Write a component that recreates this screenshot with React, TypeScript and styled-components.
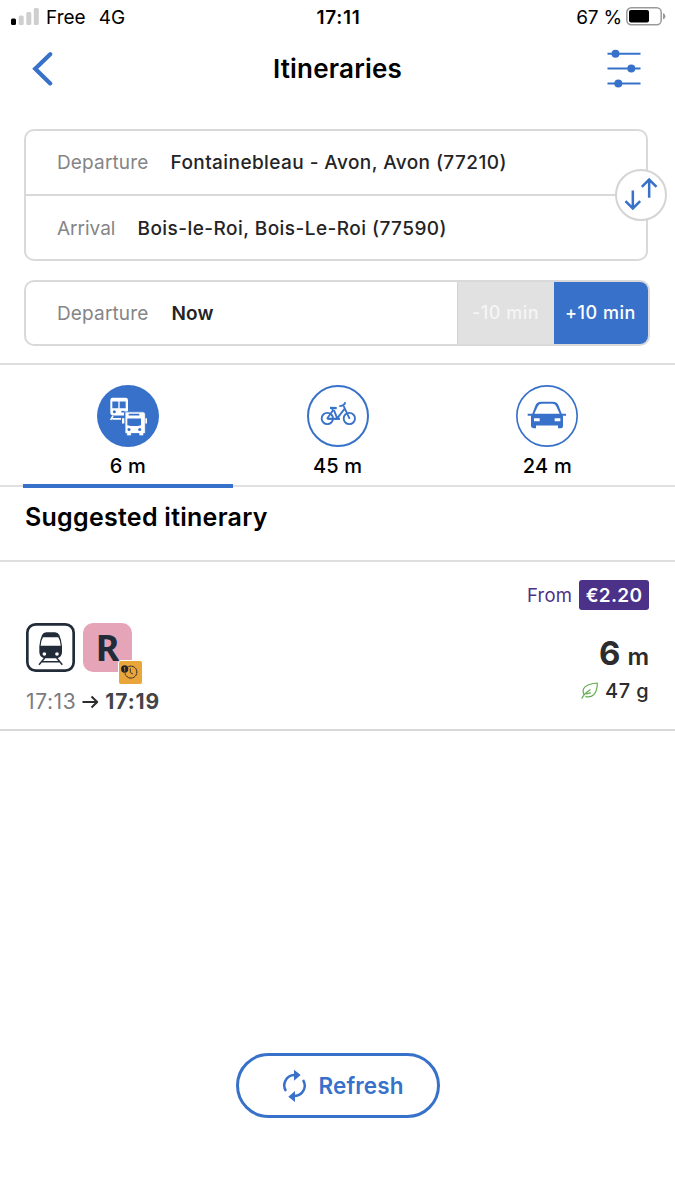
import React from "react";
import styled, { createGlobalStyle } from "styled-components";

const blue = "#3871ca";
const line = "#d9d9db";

const GlobalStyle = createGlobalStyle`
  * { box-sizing: border-box; }
  body { margin: 0; background: #fff; }
  button { font: inherit; padding: 0; margin: 0; border: 0; background: none; letter-spacing: inherit; }
  svg { display: block; flex: none; }
`;

const Screen = styled.div`
  width: 675px;
  height: 1200px;
  background: #fff;
  color: #000;
  font-family: Inter, "Liberation Sans", sans-serif;
  display: flex;
  flex-direction: column;
  overflow: hidden;
`;

const Text = styled.span<{ $size: number; $weight?: number; $spacing?: number; $color?: string }>`
  font-size: ${(p) => p.$size}px;
  font-weight: ${(p) => p.$weight ?? 400};
  letter-spacing: ${(p) => p.$spacing ?? 0}px;
  color: ${(p) => p.$color ?? "inherit"};
  line-height: 1.2;
  white-space: nowrap;
`;

const StatusBar = styled.div`
  height: 34px;
  display: grid;
  grid-template-columns: 1fr auto 1fr;
  align-items: center;
  padding: 2px 9px 0 11px;
  svg { margin-bottom: 2px; }
`;

const Carrier = styled.div`
  display: flex;
  align-items: center;
  gap: 7px;
`;

const Network = styled.div`
  margin-left: 6px;
  display: flex;
`;

const Battery = styled.div`
  display: flex;
  align-items: center;
  justify-content: flex-end;
  gap: 4px;
`;

const Header = styled.header`
  height: 69px;
  display: grid;
  grid-template-columns: 1fr auto 1fr;
  align-items: center;
  padding: 0 32px 0 32px;
  > :first-child { margin-left: -1px; }
  > :last-child { justify-self: end; margin-right: 2px; }
`;

const SearchForm = styled.section`
  padding: 26px 25px 17px 24px;
  display: flex;
  flex-direction: column;
  gap: 19px;
  border-bottom: 2px solid #dedee0;
  height: 262px;
`;

const RouteCard = styled.div`
  position: relative;
  width: 624px;
  height: 132px;
  border: 2px solid ${line};
  border-radius: 10px;
`;

const RouteRow = styled.div`
  height: 63px;
  padding: 1px 0 0 31px;
  display: flex;
  align-items: center;
  gap: 22px;
  & + & { border-top: 2px solid ${line}; height: 65px; padding-top: 4px; }
`;

const SwapButton = styled.button`
  position: absolute;
  right: -21px;
  top: 38px;
  width: 52px;
  height: 52px;
  border: 2px solid #d4d4d6;
  border-radius: 50%;
  background: #fff;
`;

const TimeCard = styled.div`
  height: 66px;
  display: flex;
  align-items: stretch;
  border: 2px solid ${line};
  border-radius: 10px;
  overflow: hidden;
`;

const TimeValue = styled.div`
  flex: 1;
  display: flex;
  align-items: center;
  gap: 23px;
  padding: 2px 0 0 31px;
`;

const ShiftButton = styled.button<{ $active?: boolean }>`
  width: ${(p) => (p.$active ? 94 : 97)}px;
  background: ${(p) => (p.$active ? blue : "#e1e1e1")};
  color: ${(p) => (p.$active ? "#fff" : "#f5f5f5")};
  border-left: ${(p) => (p.$active ? 0 : 1)}px solid #d2d2d4;
  padding-right: 1px;
`;

const Tabs = styled.nav`
  height: 122px;
  display: grid;
  grid-template-columns: repeat(3, 209.75px);
  padding-left: 23px;
  border-bottom: 2px solid #e0e0e2;
`;

const Tab = styled.div<{ $active?: boolean }>`
  height: 123px;
  display: flex;
  flex-direction: column;
  align-items: center;
  padding-top: 20px;
  gap: 7px;
  border-bottom: 4px solid ${(p) => (p.$active ? blue : "transparent")};
`;

const Suggested = styled.div`
  height: 75px;
  padding: 15px 25px;
  border-bottom: 2px solid #dedee0;
`;

const Itinerary = styled.article`
  height: 169px;
  padding: 18px 26px 0;
  border-bottom: 2px solid #d9d9db;
  display: flex;
  justify-content: space-between;
`;

const Journey = styled.div`
  padding-top: 43px;
`;

const Lines = styled.div`
  display: flex;
  gap: 8px;
`;

const LineBadge = styled.div`
  position: relative;
  width: 49px;
  height: 49px;
  border-radius: 10px;
  background: #e5a4b8;
  color: #222b38;
  font-family: "Noto Sans", "Open Sans", sans-serif;
  display: flex;
  align-items: center;
  justify-content: center;
`;

const DelayBadge = styled.div`
  position: absolute;
  left: 34.5px;
  top: 37px;
  width: 25px;
  height: 25px;
  border: 1.5px solid #fff;
  border-radius: 3px;
  background: #e9a53a;
`;

const Times = styled.div`
  display: flex;
  align-items: center;
  gap: 6px;
  margin-top: 17px;
`;

const Summary = styled.div`
  display: flex;
  flex-direction: column;
  align-items: flex-end;
`;

const Fare = styled.div`
  display: flex;
  align-items: center;
  gap: 7px;
  color: #4b3187;
`;

const Price = styled.div`
  width: 70px;
  height: 30px;
  padding-top: 2px;
  border-radius: 3px;
  background: #4b3187;
  display: flex;
  align-items: center;
  justify-content: center;
`;

const Duration = styled.div`
  display: flex;
  align-items: baseline;
  gap: 7px;
  margin-top: 24px;
  color: #2c2c2e;
`;

const Carbon = styled.div`
  display: flex;
  align-items: center;
  gap: 7px;
  margin-top: 5px;
  color: #2c2c2e;
`;

const Footer = styled.footer`
  margin-top: 322px;
  display: flex;
  justify-content: center;
`;

const RefreshButton = styled.button`
  width: 204px;
  height: 65px;
  border: 3px solid ${blue};
  border-radius: 33px;
  color: ${blue};
  display: flex;
  align-items: center;
  padding-left: 43px;
  gap: 11px;
`;

const SignalIcon = () => (
  <svg width="28" height="18" viewBox="0 0 28 18">
    <rect x="0" y="10.5" width="5" height="6.5" rx="1.5" fill="#000" />
    <rect x="7.7" y="7.5" width="5" height="9.5" rx="1.5" fill="#cfcfcf" />
    <rect x="15.3" y="4" width="5" height="13" rx="1.5" fill="#cfcfcf" />
    <rect x="22.8" y="0" width="5" height="17" rx="1.5" fill="#cfcfcf" />
  </svg>
);

const BatteryIcon = () => (
  <svg width="40" height="19" viewBox="0 0 40 19">
    <rect x="0.8" y="0.8" width="34.4" height="17" rx="4.5" fill="none" stroke="#999" strokeWidth="1.5" />
    <rect x="3" y="3" width="20" height="12.4" rx="2" fill="#000" />
    <path d="M37 6q2.4 1 2.4 3.2t-2.4 3.2z" fill="#999" />
  </svg>
);

const BackIcon = () => (
  <svg width="22" height="36" viewBox="0 0 22 36" fill="none" stroke={blue} strokeWidth="4.2" strokeLinecap="round" strokeLinejoin="miter">
    <path d="M19.2 3.2L4.2 17.8L19.2 32.4" />
  </svg>
);

const FiltersIcon = () => (
  <svg width="34" height="40" viewBox="0 0 34 40" stroke={blue} strokeWidth="2" fill={blue}>
    <path d="M0.5 4.8h33M0.5 19.6h33M0.5 34.4h33" />
    <g stroke="none">
      <circle cx="8.5" cy="4.8" r="4" />
      <circle cx="24.3" cy="19.6" r="4" />
      <circle cx="11.3" cy="34.4" r="4" />
    </g>
  </svg>
);

const SwapIcon = () => (
  <svg width="48" height="48" viewBox="530.5 167.5 144 144" fill="none" stroke={blue} strokeWidth="7.5">
    <path d="M578 226v55M556 258l22 22l22-22M627 248v-55M605 215l22-22l22 22" />
  </svg>
);

const TransitIcon = () => (
  <svg width="62" height="62" viewBox="51 44.5 186 186">
    <circle cx="144" cy="137.5" r="93" fill={blue} />
    <path d="M98 83h39q7 0 7 7v36h-12v10h-32q-9 0-9-9v-37q0-7 7-7z" fill="#fff" />
    <path d="M97 94h18v20h-18zM119 94h18v20h-18z" fill={blue} />
    <circle cx="103" cy="125" r="4.5" fill={blue} />
    <path d="M124 122h10v5h-10z" fill={blue} />
    <path d="M99 137l-7 12M97 146h26" stroke="#fff" strokeWidth="5" fill="none" />
    <path d="M137 125h52q7 0 7 7v58h-5v7h-14v-7h-23v7h-14v-7h-5v-60q0-5 2-5z" fill="#fff" stroke={blue} strokeWidth="2.5" />
    <path d="M126 144h7v16h-7zM196 144h5v16h-5z" fill="#fff" />
    <path d="M146 131h32v5h-32zM142 145h41v20q-20 5-41 0z" fill={blue} />
    <circle cx="147" cy="178" r="4.5" fill={blue} />
    <circle cx="179" cy="178" r="4.5" fill={blue} />
  </svg>
);

const BikeIcon = () => (
  <svg width="62" height="62" viewBox="51 44.5 186 186" fill="none" stroke={blue} strokeWidth="5.5">
    <circle cx="144" cy="137.5" r="90" strokeWidth="6" />
    <circle cx="112" cy="145" r="17" />
    <circle cx="178" cy="145" r="17" />
    <path d="M111 146l18-26M129 122l-3-9M132 120l10 26M142 144l21-27M161 108l18 38M166 96q-3 11-18 12" strokeLinejoin="round" />
    <path d="M120 113l20 1" strokeWidth="7" />
    <path d="M112 146h38" strokeWidth="6.5" />
  </svg>
);

const CarIcon = () => (
  <svg width="62" height="62" viewBox="49 44.5 186 186">
    <circle cx="142" cy="137.5" r="90.5" fill="none" stroke={blue} strokeWidth="5" />
    <path d="M96 136l11-29q4-12 18-12h34q14 0 18 12l11 29h2v32q0 6-6 6h-9v-8h-66v8h-6q-9 0-9-8v-30z" fill={blue} />
    <path d="M84 131h115v6h-115z" fill={blue} />
    <path d="M104 131l10-22q3-8 11-8h34q8 0 11 8l10 22z" fill="#fff" />
    <path d="M103 144h17v9h-17zM165 144h17v9h-17z" fill="#fff" />
  </svg>
);

const TrainIcon = () => (
  <svg width="49" height="49" viewBox="48 39 147 147">
    <rect x="52" y="43" width="139" height="139" rx="25" fill="#fff" stroke="#222b38" strokeWidth="8" />
    <path d="M109 67h26q9 0 13 8q6 14 8 34v17q0 14-14 19h-40q-14-5-14-19v-17q2-20 8-34q4-8 13-8z" fill="#222b38" />
    <path d="M99 82h46q7 12 7 25h-60q0-13 7-25z" fill="#fff" />
    <circle cx="103" cy="132" r="5.5" fill="#fff" />
    <circle cx="141" cy="132" r="5.5" fill="#fff" />
    <path d="M104 144L87 164M140 144l17 20M96 155h52" stroke="#222b38" strokeWidth="4.5" />
  </svg>
);

const DelayIcon = () => (
  <svg width="22" height="22" viewBox="327 156 66 66">
    <path d="M355 173a18 18 0 1 1-10 20" fill="none" stroke="#1f2430" strokeWidth="3" strokeDasharray="9 1" />
    <path d="M361 178v13l8 4" fill="none" stroke="#4a391c" strokeWidth="3" />
    <circle cx="344" cy="180" r="11" fill="#1f2430" />
    <path d="M344 174v8M344 184v3" stroke="#e9a53a" strokeWidth="2.5" />
  </svg>
);

const ArrowIcon = () => (
  <svg width="17" height="14" viewBox="0 0 17 14" fill="none" stroke="#2c2c2e" strokeWidth="2" strokeLinejoin="round">
    <path d="M0.5 7h15M9.5 1.5L15.2 7L9.5 12.5" />
  </svg>
);

const LeafIcon = () => (
  <svg width="17" height="17" viewBox="246 367 50 50" fill="none" stroke="#65ad52" strokeWidth="3.5" strokeLinecap="round" strokeLinejoin="round">
    <path d="M249 415q6-14 24-25M255 405q-9-21 12-29q10-4 27-6q0 21-8 31q-9 12-26 9" />
    <path d="M261 402l13-3" />
  </svg>
);

const RefreshIcon = () => (
  <svg width="26" height="34" viewBox="186 87 78 102" fill={blue}>
    <path d="M198 153a31 31 0 0 1 25-48M249 120a31 31 0 0 1-25 48" fill="none" stroke={blue} strokeWidth="7.5" />
    <path d="M222 89l20 16l-20 17zM225 153v33l-20-16z" />
  </svg>
);

const modes = [
  { id: "transit", label: "6 m", icon: <TransitIcon />, active: true },
  { id: "bike", label: "45 m", icon: <BikeIcon /> },
  { id: "car", label: "24 m", icon: <CarIcon /> },
];

export default function App() {
  return (
    <Screen>
      <GlobalStyle />
      <StatusBar>
        <Carrier>
          <SignalIcon />
          <Text $size={19}>Free</Text>
          <Network><Text $size={19}>4G</Text></Network>
        </Carrier>
        <Text $size={19} $weight={600} $spacing={0.7}>17:11</Text>
        <Battery>
          <Text $size={19} $spacing={-0.2}>67 %</Text>
          <BatteryIcon />
        </Battery>
      </StatusBar>

      <Header>
        <BackIcon />
        <Text $size={26} $weight={600} $spacing={0.2}>Itineraries</Text>
        <FiltersIcon />
      </Header>

      <SearchForm>
        <RouteCard>
          <RouteRow>
            <Text $size={19} $color="#858587" $spacing={0.15}>Departure</Text>
            <Text $size={19} $weight={500} $color="#242426" $spacing={0.42}>Fontainebleau - Avon, Avon (77210)</Text>
          </RouteRow>
          <RouteRow>
            <Text $size={19} $color="#858587" $spacing={0}>Arrival</Text>
            <Text $size={19} $weight={500} $color="#242426" $spacing={0.45}>Bois-le-Roi, Bois-Le-Roi (77590)</Text>
          </RouteRow>
          <SwapButton aria-label="Swap"><SwapIcon /></SwapButton>
        </RouteCard>
        <TimeCard>
          <TimeValue>
            <Text $size={19} $color="#858587" $spacing={0.15}>Departure</Text>
            <Text $size={19} $weight={600} $color="#242426" $spacing={0.2}>Now</Text>
          </TimeValue>
          <ShiftButton><Text $size={18} $weight={500} $spacing={0.5}>-10 min</Text></ShiftButton>
          <ShiftButton $active><Text $size={18} $weight={500} $spacing={0.5}>+10 min</Text></ShiftButton>
        </TimeCard>
      </SearchForm>

      <Tabs>
        {modes.map((m) => (
          <Tab key={m.id} $active={m.active}>
            {m.icon}
            <Text $size={20} $weight={500} $spacing={0.2}>{m.label}</Text>
          </Tab>
        ))}
      </Tabs>

      <Suggested>
        <Text $size={25} $weight={600} $spacing={0.27}>Suggested itinerary</Text>
      </Suggested>

      <Itinerary>
        <Journey>
          <Lines>
            <TrainIcon />
            <LineBadge>
              <Text $size={36} $weight={700}>R</Text>
              <DelayBadge><DelayIcon /></DelayBadge>
            </LineBadge>
          </Lines>
          <Times>
            <Text $size={21} $spacing={0.6} $color="#7c7c7e">17:13</Text>
            <ArrowIcon />
            <Text $size={21} $weight={700} $spacing={0.9} $color="#444446">17:19</Text>
          </Times>
        </Journey>
        <Summary>
          <Fare>
            <Text $size={18.5} $spacing={0.15}>From</Text>
            <Price><Text $size={19} $weight={600} $color="#fff" $spacing={0.3}>€2.20</Text></Price>
          </Fare>
          <Duration>
            <Text $size={33} $weight={700}>6</Text>
            <Text $size={24} $weight={600}>m</Text>
          </Duration>
          <Carbon>
            <LeafIcon />
            <Text $size={20} $weight={500} $spacing={0.4}>47 g</Text>
          </Carbon>
        </Summary>
      </Itinerary>

      <Footer>
        <RefreshButton>
          <RefreshIcon />
          <Text $size={22.5} $weight={600} $spacing={0.1}>Refresh</Text>
        </RefreshButton>
      </Footer>
    </Screen>
  );
}
